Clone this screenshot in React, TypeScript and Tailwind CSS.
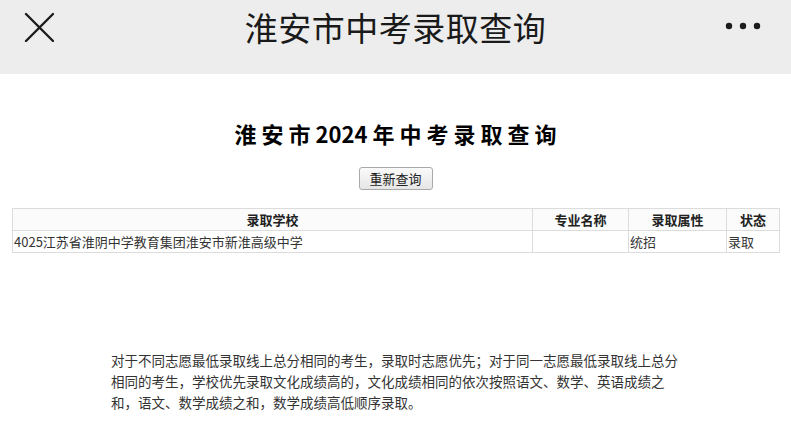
import React from 'react';

const cjk = { fontFamily: '"Noto Sans CJK SC", "Noto Sans", sans-serif' };

function CloseIcon() {
  return (
    <svg width="30" height="30" viewBox="0 0 30 30" fill="none">
      <path d="M2 2L29 29M29 2L2 29" stroke="#1c1c1c" strokeWidth="2.4" strokeLinecap="round" />
    </svg>
  );
}

function MoreIcon() {
  return (
    <svg width="36" height="8" viewBox="0 0 36 8">
      <circle cx="4" cy="4" r="3.2" fill="#1c1c1c" />
      <circle cx="18" cy="4" r="3.2" fill="#1c1c1c" />
      <circle cx="32" cy="4" r="3.2" fill="#1c1c1c" />
    </svg>
  );
}

const rows = [
  { school: '4025江苏省淮阴中学教育集团淮安市新淮高级中学', major: '', attr: '统招', status: '录取' },
];

export default function App() {
  return (
    <div className="w-[791px] h-[428px] overflow-hidden bg-white text-[#222]" style={cjk}>
      <div className="h-[74px] bg-[#ededed] grid grid-cols-[1fr_auto_1fr] items-start">
        <div className="pl-[24px] pt-[12px]">
          <CloseIcon />
        </div>
        <div className="pt-[5px] text-[33px] leading-[44px] text-[#1a1a1a] tracking-[0.5px]">
          淮安市中考录取查询
        </div>
        <div className="flex justify-end pr-[30px] pt-[22px]">
          <MoreIcon />
        </div>
      </div>

      <div className="flex flex-col items-center">
        <h1 className="mt-[44px] text-[22px] leading-[30px] font-bold text-black">
          淮 安 市 2024 年 中 考 录 取 查 询
        </h1>
        <button
          type="button"
          className="mt-[19px] h-[23px] w-[74px] rounded-[3px] border border-[#a9a9a9] bg-gradient-to-b from-[#fafafa] to-[#e6e6e6] text-[13px] leading-[20px] text-[#222]"
        >
          重新查询
        </button>
      </div>

      <div className="mt-[18px] px-[12px]">
        <table className="w-[768px] border-collapse border border-[#dcdcdc] text-[13px] leading-[21px]">
          <thead>
            <tr className="bg-[#fbfbfb]">
              <th className="border border-[#dcdcdc] font-bold text-center">录取学校</th>
              <th className="w-[96px] border border-[#dcdcdc] font-bold text-center">专业名称</th>
              <th className="w-[98px] border border-[#dcdcdc] font-bold text-center">录取属性</th>
              <th className="w-[53px] border border-[#dcdcdc] font-bold text-center">状态</th>
            </tr>
          </thead>
          <tbody>
            {rows.map((r) => (
              <tr key={r.school}>
                <td className="border border-[#dcdcdc] px-[1px] text-[#333]">{r.school}</td>
                <td className="border border-[#dcdcdc] px-[1px] text-[#333]">{r.major}</td>
                <td className="border border-[#dcdcdc] px-[1px] text-[#333]">{r.attr}</td>
                <td className="border border-[#dcdcdc] px-[1px] text-[#333]">{r.status}</td>
              </tr>
            ))}
          </tbody>
        </table>
      </div>

      <p className="mt-[97px] ml-[111px] text-[13.5px] leading-[21px] text-[#333]">
        对于不同志愿最低录取线上总分相同的考生，录取时志愿优先；对于同一志愿最低录取线上总分
        <br />
        相同的考生，学校优先录取文化成绩高的，文化成绩相同的依次按照语文、数学、英语成绩之
        <br />
        和，语文、数学成绩之和，数学成绩高低顺序录取。
      </p>
    </div>
  );
}
